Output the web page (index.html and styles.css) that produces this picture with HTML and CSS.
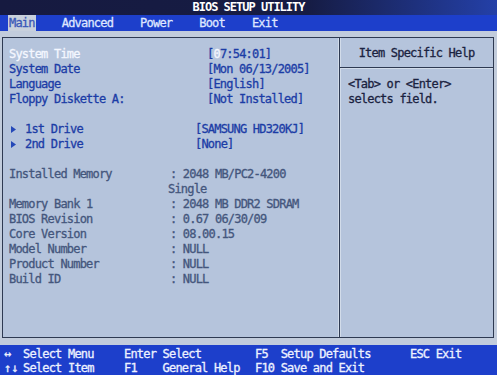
FILE: index.html
```html
<!DOCTYPE html>
<html>
<head>
<meta charset="utf-8">
<link rel="stylesheet" href="styles.css">
</head>
<body>
<div class="screen">
  <header class="title">BIOS SETUP UTILITY</header>
  <nav class="menu">
    <span class="tab active">Main</span>
    <span class="tab">Advanced</span>
    <span class="tab">Power</span>
    <span class="tab">Boot</span>
    <span class="tab">Exit</span>
  </nav>
  <div class="body">
    <div class="panel">
      <section class="main">
        <div class="row g1"><span class="label sel">System Time</span><span class="val">[<span class="cur">0</span>7:54:01]</span></div>
        <div class="row g1"><span class="label">System Date</span><span class="val">[Mon 06/13/2005]</span></div>
        <div class="row g1"><span class="label">Language</span><span class="val">[English]</span></div>
        <div class="row g1"><span class="label">Floppy Diskette A:</span><span class="val">[Not Installed]</span></div>
        <div class="row blank"></div>
        <div class="row g2"><span class="label"><svg class="tri" width="5" height="7" viewBox="0 0 5 7"><path d="M0 0L5 3.5L0 7Z"/></svg>1st Drive</span><span class="val">[SAMSUNG HD320KJ]</span></div>
        <div class="row g2"><span class="label"><svg class="tri" width="5" height="7" viewBox="0 0 5 7"><path d="M0 0L5 3.5L0 7Z"/></svg>2nd Drive</span><span class="val">[None]</span></div>
        <div class="row blank"></div>
        <div class="row g3"><span class="label">Installed Memory</span><span class="val">: 2048 MB/PC2-4200</span></div>
        <div class="row g3"><span class="label"></span><span class="val single">Single</span></div>
        <div class="row g3"><span class="label">Memory Bank 1</span><span class="val">: 2048 MB DDR2 SDRAM</span></div>
        <div class="row g3"><span class="label">BIOS Revision</span><span class="val">: 0.67 06/30/09</span></div>
        <div class="row g3"><span class="label">Core Version</span><span class="val">: 08.00.15</span></div>
        <div class="row g3"><span class="label">Model Number</span><span class="val">: NULL</span></div>
        <div class="row g3"><span class="label">Product Number</span><span class="val">: NULL</span></div>
        <div class="row g3"><span class="label">Build ID</span><span class="val">: NULL</span></div>
      </section>
      <aside class="help">
        <div class="help-head">Item Specific Help</div>
        <div class="help-body">
          <div>&lt;Tab&gt; or &lt;Enter&gt;</div>
          <div>selects field.</div>
        </div>
      </aside>
    </div>
  </div>
  <footer class="keys">
    <div class="key"><span class="arr">&#8596;</span>Select Menu</div>
    <div class="key">Enter Select</div>
    <div class="key">F5  Setup Defaults</div>
    <div class="key">ESC Exit</div>
    <div class="key"><span class="arr">&#8593;&#8595;</span>Select Item</div>
    <div class="key">F1    General Help</div>
    <div class="key">F10 Save and Exit</div>
    <div class="key"></div>
  </footer>
</div>
</body>
</html>
```

FILE: styles.css
```css
html, body {
  margin: 0;
  padding: 0;
}
body {
  width: 497px;
  height: 375px;
  overflow: hidden;
  background: #bcc8da;
  font-family: "DejaVu Sans Mono", "Liberation Mono", monospace;
  font-size: 12px;
  letter-spacing: -0.8px;
  -webkit-text-stroke: 0.3px currentColor;
}
.screen {
  display: flex;
  flex-direction: column;
  width: 497px;
  height: 375px;
}
.title {
  height: 15px;
  line-height: 15px;
  text-align: center;
  color: #ffffff;
  font-weight: bold;
  letter-spacing: -1px;
  -webkit-text-stroke: 0;
  background: linear-gradient(to right, #161a40 0%, #161c44 62%, #2440a8 100%);
}
.menu {
  height: 16px;
  display: flex;
  align-items: stretch;
  gap: 25px;
  padding-left: 8px;
  background: #1d3fcb;
  color: #dfe6ff;
  line-height: 16px;
}
.tab {
  padding: 0 1px;
}
.tab.active {
  background: #c8d0dc;
  color: #3a58b8;
}
.body {
  height: 301px;
  padding: 6px 3px 7px 2px;
  background: #c2ccdc;
}
.panel {
  height: 299px;
  display: flex;
  border: 1px solid #2e3a52;
  background: #b5c4dc;
}
.main {
  width: 337px;
  padding: 9px 0 0 6px;
  box-sizing: border-box;
  border-right: 1px solid #2e3a52;
  box-shadow: inset -1px 0 0 #d2dcea;
}
.row {
  display: flex;
  height: 15px;
  line-height: 15px;
  white-space: pre;
}
.label {
  flex: none;
  color: #1b3ca6;
  display: flex;
  align-items: center;
}
.val {
  color: #1b3ca6;
}
.g1 .label { width: 198px; }
.g2 .label { width: 186px; }
.g3 .label { width: 161px; color: #44567c; }
.g3 .val { color: #44567c; }
.val.single { margin-left: -2px; }
.sel { color: #f4f7ff; }
.cur { color: #f4f7ff; }
.tri {
  fill: #2448b8;
  margin: 0 9px 0 2px;
}
.help {
  flex: 1;
  display: flex;
  flex-direction: column;
  box-shadow: inset 1px 0 0 #d2dcea;
}
.help-head {
  height: 29px;
  line-height: 31px;
  text-align: center;
  color: #1a2240;
  border-bottom: 1px solid #2e3a52;
  box-shadow: 0 1px 0 #d2dcea;
}
.help-body {
  padding: 9px 0 0 8px;
  line-height: 15px;
  color: #1a2240;
}
.keys {
  height: 30px;
  box-sizing: border-box;
  padding: 2px 0 0 4px;
  background: #1d3fcb;
  color: #eef2ff;
  display: grid;
  grid-template-columns: 120px 131px 155px auto;
  grid-auto-rows: 14px;
  line-height: 14px;
  white-space: pre;
}
.arr {
  display: inline-block;
  width: 19px;
  letter-spacing: 0;
}
```
